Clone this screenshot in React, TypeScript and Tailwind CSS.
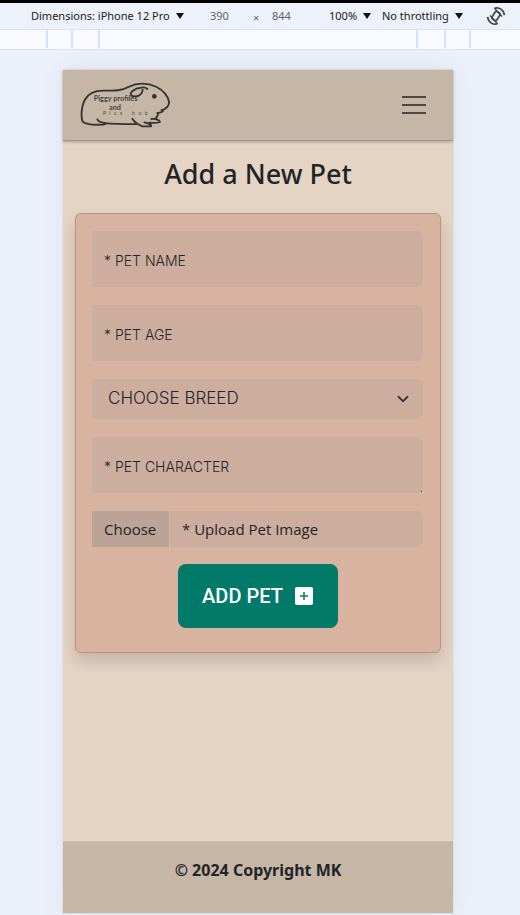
import type { ReactNode } from "react";

const sans = "font-['Noto_Sans',sans-serif]";
const fieldFill = "bg-[#cdad9e] rounded-r-md";

function Caret() {
  return (
    <svg className="h-[6px] w-[8px] shrink-0" viewBox="0 0 8 6" aria-hidden="true">
      <path d="M0 0h8L4 6z" fill="#111" />
    </svg>
  );
}

function RotateIcon() {
  return (
    <svg className="h-5 w-5" viewBox="0 0 20 20" fill="none" stroke="#444746" strokeWidth="1.7" aria-hidden="true">
      <rect x="7.2" y="5.600" width="5.600" height="8.800" rx="1.800" transform="rotate(32 10 10)" />
      <path d="M8.500 2.200C13 .6 17.800 4 18.400 9.200M11.500 17.800C7 19.400 2.200 16 1.600 10.800" />
      <path d="M8.500 2.200 16 10.500M11.500 17.800 4 9.500" strokeWidth="1.400" />
    </svg>
  );
}

function PiggyLogo() {
  return (
    <svg className="h-[46px] w-[92px]" viewBox="60 51 276 138" fill="none" stroke="#333" strokeWidth="5.500" strokeLinecap="round" strokeLinejoin="round" role="img" aria-label="Piggy profiles and Pics hub">
      <path d="M112 163c2 6 8 10 24 11 4 3-4 5-12 5-24 1-46 1-56-9-6-15-4-45 6-65 10-19 31-28 56-28 30 0 55 1 75-11 25-12 57-13 85 0 20 10 35 29 37 44 1 10-5 20-23 26 10 2 2 6-12 8 6 2-4 16-6 17" />
      <path d="M138 175c27 2 57 3 90 2M217 161c6 10 18 18 30 23h26c4-4-8-10-20-12M274 162c10-2 24 2 26 9-8 3-22 3-32 2" />
      <path d="M214 92c-8-10 10-22 30-24 8-2 14 0 18 4M214 92c16 6 32 0 34-18" />
      <circle cx="283" cy="94" r="7" fill="#333" stroke="none" />
      <g fill="#444" stroke="none" fontFamily="Lato, sans-serif">
        <text x="101" y="108" fontSize="22" fontWeight="700">Piggy profiles</text>
        <text x="147" y="136" fontSize="22" fontWeight="700">and</text>
        <text y="151" fontSize="15" x="129 148 162 180 198 216 236 254">Pics hub</text>
      </g>
    </svg>
  );
}

function Field({ id, label, children }: { id: string; label: string; children: ReactNode }) {
  return (
    <div className="relative h-14">
      {children}
      <label htmlFor={id} className="pointer-events-none absolute top-5 left-3 font-['Inter',sans-serif] text-sm font-light text-[#212529]">
        {label}
      </label>
    </div>
  );
}

function DeviceToolbar() {
  return (
    <header>
      <div className={`flex h-[30px] items-center border-t-3 border-b border-t-black border-b-[#d3e3fd] bg-[#edf1fa] pr-[14px] pl-[31px] text-[11px] text-[#202124] ${sans}`}>
        <button className="flex w-[169px] items-center gap-[6px] whitespace-nowrap">
          Dimensions: iPhone 12 Pro <Caret />
        </button>
        <input aria-label="Width" defaultValue="390" className="w-10 bg-transparent px-[10px] text-[#5f6368]" size={3} />
        <span className="w-8 pt-1 pl-[13px] text-[#5f6368]">×</span>
        <input aria-label="Height" defaultValue="844" className="w-[57px] bg-transparent text-[#5f6368]" size={3} />
        <button className="flex w-[53px] items-center gap-[6px]">100% <Caret /></button>
        <button className="flex items-center gap-[6px] whitespace-nowrap">No throttling <Caret /></button>
        <button aria-label="Rotate" className="ml-auto"><RotateIcon /></button>
      </div>
      <div className="flex h-5 border-b border-[#d3e3fd] bg-[#f8fafe] pb-px">
        <div className="w-12 border-r-2 border-[#d3e3fd]" />
        <div className="w-[25px] border-r-2 border-[#d3e3fd]" />
        <div className="w-[27px] border-r-2 border-[#d3e3fd]" />
        <div className="flex-1 border-r-2 border-[#d3e3fd]" />
        <div className="w-7 border-r-2 border-[#d3e3fd]" />
        <div className="w-[25px] border-r-2 border-[#d3e3fd]" />
        <div className="w-[49px]" />
      </div>
    </header>
  );
}

export default function App() {
  return (
    <div className={`flex min-h-screen flex-col bg-[#ebf0f9] ${sans} text-[#212529]`}>
      <DeviceToolbar />
      <div className="flex flex-1 flex-col pt-[19px] pr-[66px] pb-px pl-[62px]">
        <div className="flex flex-1 flex-col border border-[#dce2e6] bg-[#e5d3c3] shadow-[0_0_20px_rgba(130,150,180,0.12)]">
          <nav className="flex h-[71px] items-center justify-between border-b border-[#a59588] bg-[#c6b6a6] pr-[27px] pl-[17px] shadow-[0_1px_3px_rgba(0,0,0,0.25)]">
            <a href="#home"><PiggyLogo /></a>
            <button aria-label="Menu" className="flex w-6 flex-col gap-[6px]">
              <span className="h-[2px] bg-[#494745]" />
              <span className="h-[2px] bg-[#494745]" />
              <span className="h-[2px] bg-[#494745]" />
            </button>
          </nav>
          <main className="flex-1 px-3 pt-4">
            <h1 className="mb-[22px] text-center text-[27px] leading-[34px] font-medium">Add a New Pet</h1>
            <form className="flex flex-col gap-[18px] rounded-md border border-[#b39487] bg-[#d8b4a0] pt-[17px] pr-[17px] pb-6 pl-4 shadow-[0_8px_16px_rgba(0,0,0,0.15)]">
              <Field id="name" label="* PET NAME">
                <input id="name" className={`h-full w-full px-3 pt-4 ${fieldFill}`} />
              </Field>
              <Field id="age" label="* PET AGE">
                <input id="age" className={`h-full w-full px-3 pt-4 ${fieldFill}`} />
              </Field>
              <div className="relative h-10">
                <select aria-label="Choose breed" className={`h-full w-full appearance-none px-4 font-['Inter',sans-serif] text-[17px] font-light ${fieldFill}`}>
                  <option>CHOOSE BREED</option>
                </select>
                <svg className="pointer-events-none absolute top-[14px] right-[14px] h-3 w-3" viewBox="0 0 16 16" fill="none" stroke="#343a40" strokeWidth="2.400" strokeLinecap="round" strokeLinejoin="round" aria-hidden="true">
                  <path d="m2 5 6 6 6-6" />
                </svg>
              </div>
              <Field id="character" label="* PET CHARACTER">
                <textarea id="character" className={`block h-full w-full resize-none px-3 pt-6 ${fieldFill}`} />
                <svg className="pointer-events-none absolute right-0 bottom-0 h-[2px] w-[2px]" viewBox="0 0 2 2" aria-hidden="true">
                  <path d="M0 0h1v1H0z" fill="#222" />
                  <path d="M1 1h1v1H1z" fill="#fff" />
                </svg>
              </Field>
              <label className={`relative flex h-9 items-center overflow-hidden font-['Open_Sans',sans-serif] text-[15px] ${fieldFill}`}>
                <input type="file" className="sr-only" />
                <span className="flex h-full w-[78px] items-center border-r border-[#d8b8aa] bg-[#bba497] pl-3">Choose</span>
                <span className="pl-3">* Upload Pet Image</span>
              </label>
              <button type="button" className="-mt-px flex h-16 w-40 items-center justify-center gap-3 self-center rounded-lg bg-[#027a6a] font-['Roboto',sans-serif] text-[20px] font-medium text-white">
                ADD PET
                <svg className="h-[18px] w-[18px]" viewBox="0 0 18 18" aria-hidden="true">
                  <rect width="18" height="18" rx="2" fill="white" />
                  <path d="M9 5v8M5 9h8" stroke="#027a6a" strokeWidth="1.500" />
                </svg>
              </button>
            </form>
          </main>
          <footer className="h-[72px] border-t border-[#d1c0b0] bg-[#c6b6a6] pt-4 text-center text-base leading-6 font-bold">
            © 2024 Copyright MK
          </footer>
        </div>
      </div>
    </div>
  );
}
